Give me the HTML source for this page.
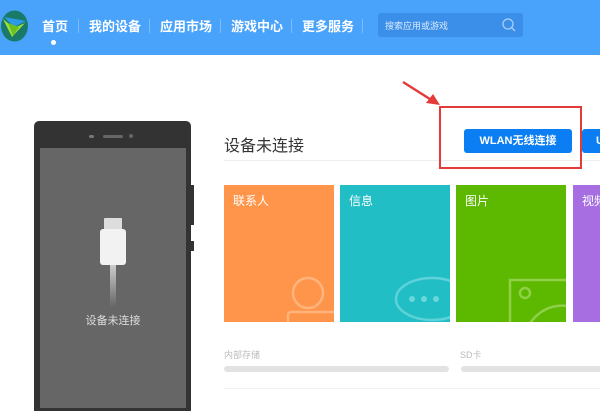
<!DOCTYPE html>
<html><head><meta charset="utf-8"><style>
*{margin:0;padding:0;box-sizing:border-box}
body{width:600px;height:400px;overflow:hidden;background:#fff;font-family:"Liberation Sans","Noto Sans CJK SC",sans-serif;position:relative}
.a{position:absolute}
.hdr{left:0;top:0;width:600px;height:55px;background:#4aa3fb}
.nav{top:16px;color:#fff;font-size:13px;font-weight:bold;white-space:nowrap}
.sep{top:19px;width:1px;height:14px;background:#7dbcfb}
.tile{top:185px;width:110px;height:137px;overflow:hidden;color:#fff;font-size:12px;padding:7px 9px;white-space:nowrap}
</style></head><body>
<div class="a hdr"></div>
<svg class="a" style="left:0;top:9px" width="30" height="34" viewBox="0 0 30 34">
<ellipse cx="14.5" cy="17" rx="13.5" ry="15.5" fill="#1a7a6a"/>
<path d="M4 8 L26 12 L14 18Z" fill="#2b9be8"/>
<path d="M3 10 L12 28 L25 14 L14 19Z" fill="#9de03a"/>
<path d="M8 14 L13 27 L19 18Z" fill="#6cc020"/>
</svg>
<div class="a nav" style="left:42px">首页</div>
<div class="a" style="left:51px;top:40px;width:5px;height:5px;border-radius:50%;background:#fff"></div>
<div class="a sep" style="left:78px"></div>
<div class="a nav" style="left:89px">我的设备</div>
<div class="a sep" style="left:149px"></div>
<div class="a nav" style="left:160px">应用市场</div>
<div class="a sep" style="left:220px"></div>
<div class="a nav" style="left:231px">游戏中心</div>
<div class="a sep" style="left:291px"></div>
<div class="a nav" style="left:302px">更多服务</div>
<div class="a sep" style="left:362px"></div>
<div class="a" style="left:378px;top:13px;width:145px;height:24px;background:#3b8fe8;border-radius:3px;color:#dbeafe;font-size:9px;padding:6px 7px">搜索应用或游戏</div>
<svg class="a" style="left:501px;top:17px" width="16" height="16" viewBox="0 0 16 16"><circle cx="7" cy="7" r="5" fill="none" stroke="#a9cff8" stroke-width="1.3"/><path d="M10.5 10.5L14 14" stroke="#a9cff8" stroke-width="1.3"/></svg>

<div class="a" style="left:34px;top:121px;width:157px;height:290px;background:#333;border-radius:5px 5px 0 0"></div>
<div class="a" style="left:191px;top:185px;width:3px;height:40px;background:#333"></div>
<div class="a" style="left:191px;top:241px;width:3px;height:10px;background:#333"></div>
<div class="a" style="left:89px;top:135px;width:5px;height:3px;background:#777;border-radius:2px"></div>
<div class="a" style="left:103px;top:135px;width:20px;height:3px;background:#666;border-radius:2px"></div>
<div class="a" style="left:129px;top:134px;width:4px;height:4px;background:#666;border-radius:50%"></div>
<div class="a" style="left:40px;top:148px;width:146px;height:260px;background:#666"></div>
<div class="a" style="left:104px;top:218px;width:18px;height:14px;background:#ddd;border-radius:1px"></div>
<div class="a" style="left:100px;top:229px;width:26px;height:36px;background:#f2f2f2;border-radius:3px"></div>
<div class="a" style="left:110px;top:265px;width:6px;height:42px;background:linear-gradient(#ccc,#666)"></div>
<div class="a" style="left:73px;top:312px;width:80px;text-align:center;color:#ddd;font-size:11px">设备未连接</div>

<div class="a" style="left:224px;top:132px;font-size:16px;color:#333">设备未连接</div>
<div class="a" style="left:224px;top:160px;width:376px;height:1px;background:#eee"></div>
<div class="a" style="left:464px;top:129px;width:108px;height:24px;background:#0a7ef2;border-radius:3px;color:#fff;font-size:11px;font-weight:bold;text-align:center;line-height:24px">WLAN无线连接</div>
<div class="a" style="left:582px;top:129px;width:30px;height:24px;background:#0a7ef2;border-radius:3px;color:#fff;font-size:11px;font-weight:bold;line-height:24px;padding-left:14px">U</div>
<div class="a" style="left:439px;top:106px;width:143px;height:63px;border:2px solid #e33a3a"></div>
<svg class="a" style="left:400px;top:78px" width="45" height="32" viewBox="0 0 45 32"><path d="M3 4 L33 23" stroke="#e33a3a" stroke-width="2.5"/><path d="M40 27 L26 25 L33 16Z" fill="#e33a3a"/></svg>

<div class="a tile" style="left:224px;background:#fe954a">联系人
<svg class="a" style="left:58px;top:90px" width="60" height="60"><circle cx="26" cy="18" r="15" fill="none" stroke="#ffb47e" stroke-width="2.5"/><rect x="6" y="37" width="60" height="30" rx="3" fill="none" stroke="#ffb47e" stroke-width="2.5"/></svg></div>
<div class="a tile" style="left:340px;background:#22bec5">信息
<svg class="a" style="left:50px;top:90px" width="62" height="60"><ellipse cx="42" cy="24" rx="36" ry="21" fill="none" stroke="#5ed2d8" stroke-width="2.5"/><circle cx="22" cy="24" r="3" fill="#6bd6dc"/><circle cx="34" cy="24" r="3" fill="#6bd6dc"/><circle cx="46" cy="24" r="3" fill="#6bd6dc"/></svg></div>
<div class="a tile" style="left:456px;background:#5db800">图片
<svg class="a" style="left:52px;top:93px" width="60" height="50"><rect x="2" y="2" width="70" height="60" fill="none" stroke="#8fd048" stroke-width="2.5"/><circle cx="17" cy="15" r="5" fill="none" stroke="#8fd048" stroke-width="2.5"/><path d="M20 48 Q35 25 60 28" fill="none" stroke="#8fd048" stroke-width="2.5"/></svg></div>
<div class="a tile" style="left:573px;width:40px;background:#a66ee0">视频</div>

<div class="a" style="left:224px;top:348px;font-size:9px;color:#bbb">内部存储</div>
<div class="a" style="left:460px;top:348px;font-size:9px;color:#bbb">SD卡</div>
<div class="a" style="left:224px;top:366px;width:225px;height:6px;background:#e2e2e2;border-radius:3px"></div>
<div class="a" style="left:461px;top:366px;width:150px;height:6px;background:#e2e2e2;border-radius:3px"></div>
<div class="a" style="left:224px;top:388px;width:376px;height:1px;background:#f2f2f2"></div>
</body></html>
